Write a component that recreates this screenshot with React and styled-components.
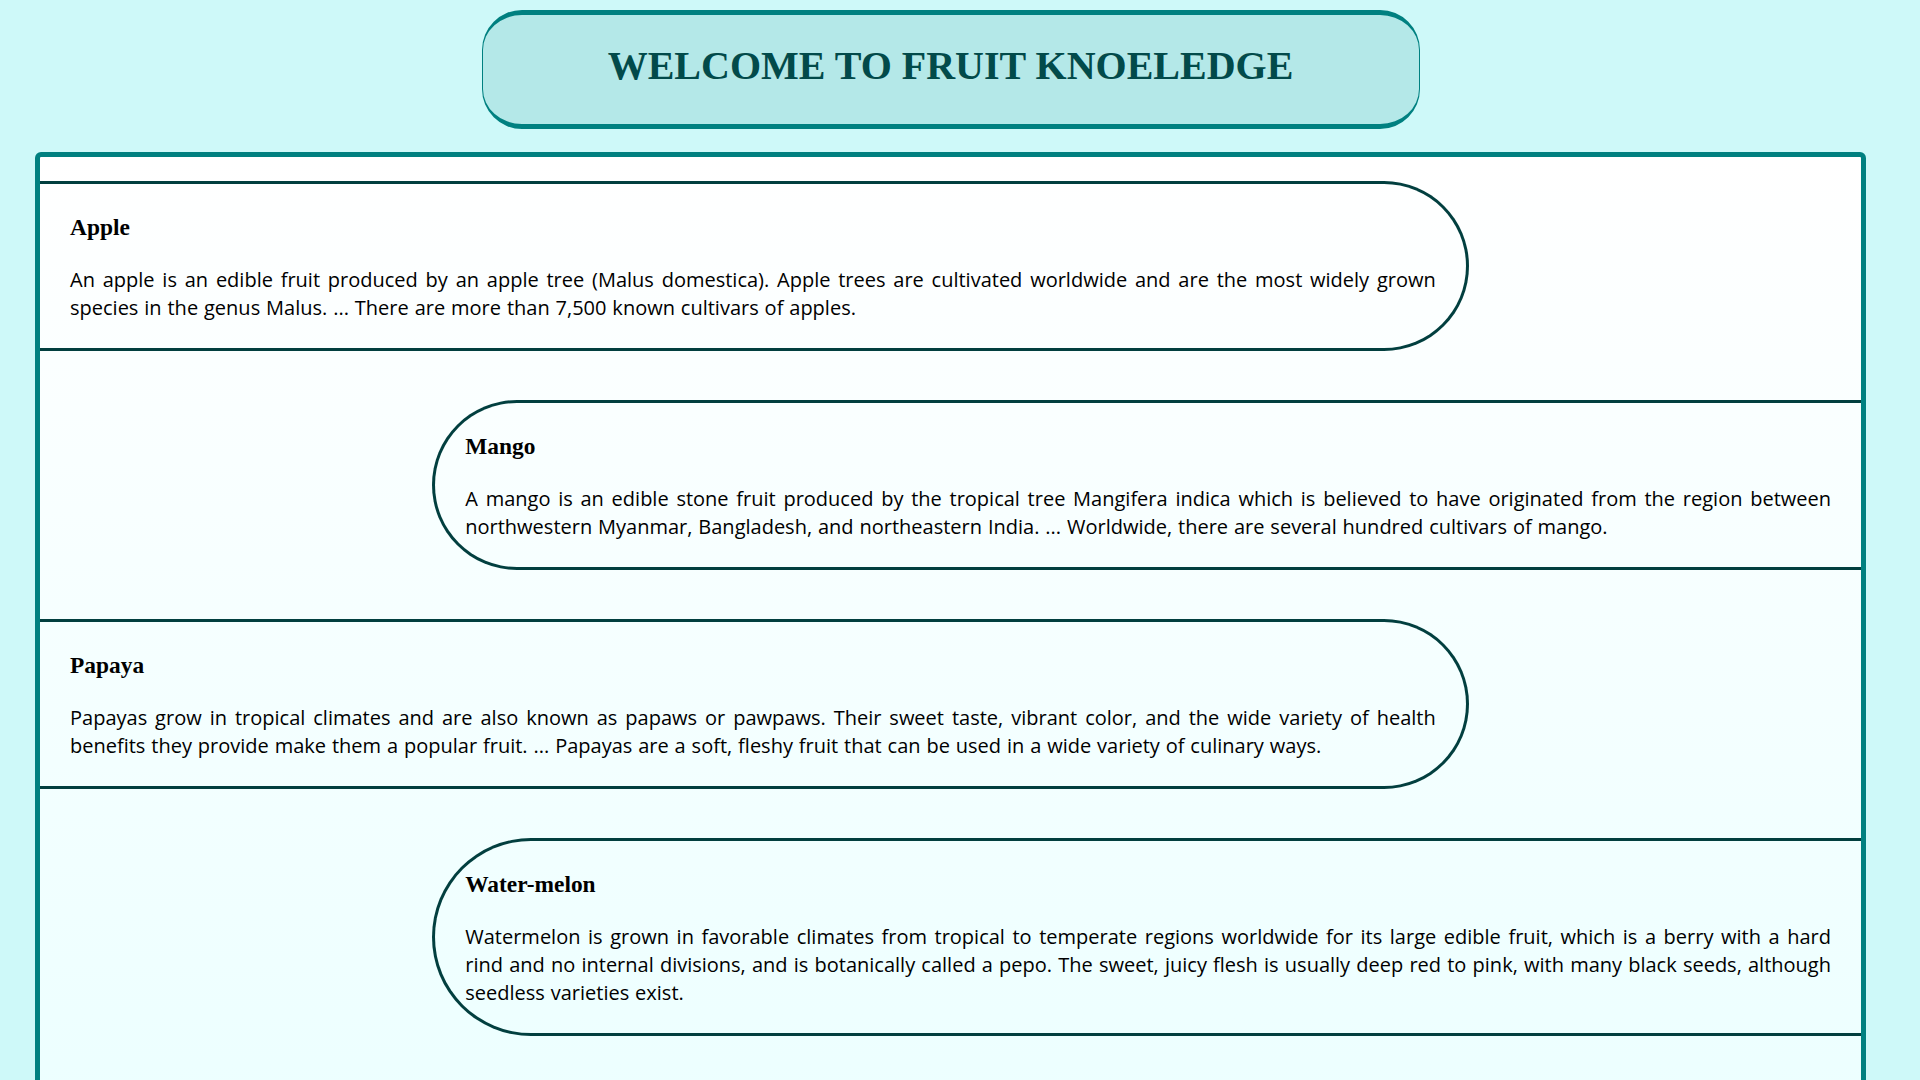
import React from 'react'
import styled, { createGlobalStyle } from 'styled-components'

const GlobalStyle = createGlobalStyle`
html {
  overflow-y: scroll;
}
body {
  margin: 0;
  padding-right: 19px;
  background: #cef9f9;
  font-size: 20px;
  font-family: "Liberation Serif", "Times New Roman", serif;
}
`

const fruits = [
  {
    name: 'Apple',
    text: 'An apple is an edible fruit produced by an apple tree (Malus domestica). Apple trees are cultivated worldwide and are the most widely grown species in the genus Malus. ... There are more than 7,500 known cultivars of apples.',
  },
  {
    name: 'Mango',
    text: 'A mango is an edible stone fruit produced by the tropical tree Mangifera indica which is believed to have originated from the region between northwestern Myanmar, Bangladesh, and northeastern India. ... Worldwide, there are several hundred cultivars of mango.',
  },
  {
    name: 'Papaya',
    text: 'Papayas grow in tropical climates and are also known as papaws or pawpaws. Their sweet taste, vibrant color, and the wide variety of health benefits they provide make them a popular fruit. ... Papayas are a soft, fleshy fruit that can be used in a wide variety of culinary ways.',
  },
  {
    name: 'Water-melon',
    text: 'Watermelon is grown in favorable climates from tropical to temperate regions worldwide for its large edible fruit, which is a berry with a hard rind and no internal divisions, and is botanically called a pepo. The sweet, juicy flesh is usually deep red to pink, with many black seeds, although seedless varieties exist.',
  },
  {
    name: 'Banana',
    text: 'A banana is an elongated, edible fruit produced by several kinds of large herbaceous flowering plants in the genus Musa. ... Bananas are grown in at least 135 countries, primarily for their fruit.',
  },
  {
    name: 'Orange',
    text: 'The orange is the fruit of various citrus species in the family Rutaceae. ... The sweet orange reproduces asexually and is one of the most cultivated fruit trees in the world.',
  },
  {
    name: 'Grapes',
    text: 'A grape is a fruit, botanically a berry, of the deciduous woody vines of the flowering plant genus Vitis. ... Grapes can be eaten fresh as table grapes or used for making wine, jam, juice and raisins.',
  },
]

const Header = styled.header`
  width: 938px;
  box-sizing: border-box;
  margin: 10px auto 0;
  background: #b4e8e8;
  border-style: solid;
  border-color: #008080;
  border-width: 5px 1px;
  border-radius: 40px;
  text-align: center;
`

const Title = styled.h1`
  margin: 27px 0 35px;
  font-size: 40px;
  font-weight: bold;
  color: #024a4a;
`

const Board = styled.main`
  display: flex;
  flex-direction: column;
  margin: 23px 35px 0;
  border: 5px solid #008080;
  border-radius: 6px;
  background: linear-gradient(#ffffff, #e0ffff);
`

const Card = styled.section`
  width: 75%;
  margin: 24px 0 25px;
  padding: 7px 30px 6px;
  border: 3px solid #023f3f;
  align-self: ${(p) => (p.$flip ? 'flex-end' : 'flex-start')};
  border-left-width: ${(p) => (p.$flip ? '3px' : '0')};
  border-right-width: ${(p) => (p.$flip ? '0' : '3px')};
  border-radius: ${(p) => (p.$flip ? '500px 0 0 500px' : '0 500px 500px 0')};
`

const Name = styled.h3`
  margin: 23px 0 25px;
  font-size: 23.4px;
  color: #000;
`

const Text = styled.p`
  margin: 20px 0;
  font-family: "Comic Sans MS", "Open Sans", sans-serif;
  font-size: 20px;
  line-height: 28px;
  word-spacing: 0.7px;
  text-align: justify;
  color: #000;
`

export default function App() {
  return (
    <>
      <GlobalStyle />
      <Header>
        <Title>WELCOME TO FRUIT KNOELEDGE</Title>
      </Header>
      <Board>
        {fruits.map((f, i) => (
          <Card key={f.name} $flip={i % 2 === 1}>
            <Name>{f.name}</Name>
            <Text>{f.text}</Text>
          </Card>
        ))}
      </Board>
    </>
  )
}
